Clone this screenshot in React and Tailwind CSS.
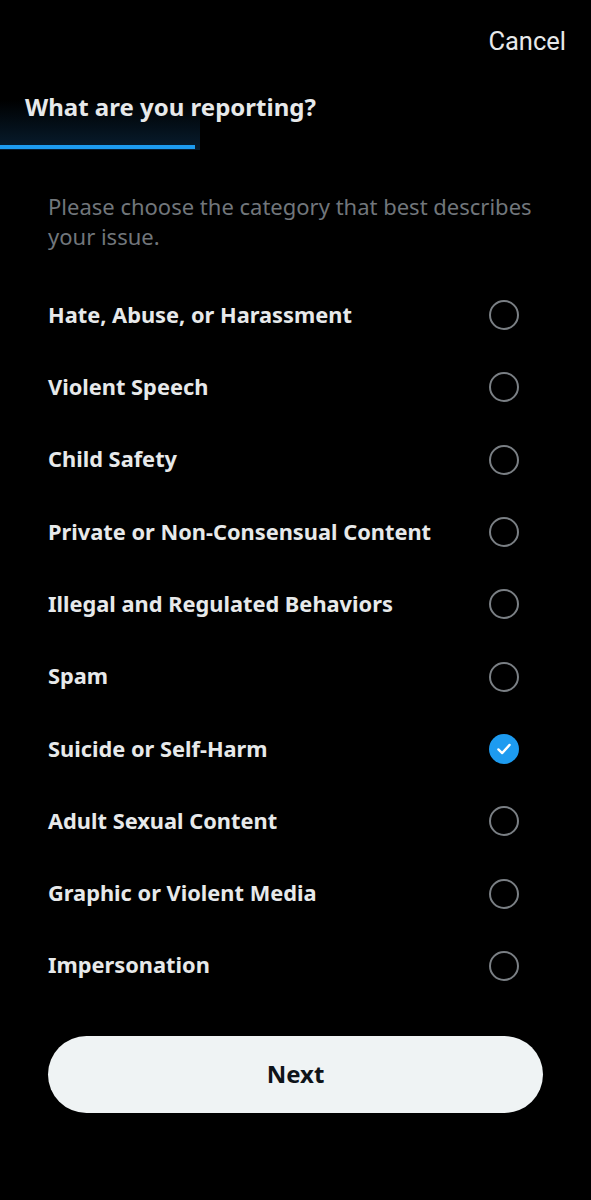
import React from "react";

const items = [
  "Hate, Abuse, or Harassment",
  "Violent Speech",
  "Child Safety",
  "Private or Non-Consensual Content",
  "Illegal and Regulated Behaviors",
  "Spam",
  "Suicide or Self-Harm",
  "Adult Sexual Content",
  "Graphic or Violent Media",
  "Impersonation",
];

function Radio({ checked }) {
  if (checked) {
    return (
      <div className="w-[30px] h-[30px] rounded-full bg-[#1d9bf0] flex items-center justify-center">
        <svg width="18" height="18" viewBox="0 0 24 24" fill="none" stroke="white" strokeWidth="3" strokeLinecap="round" strokeLinejoin="round">
          <path d="M4.5 12.5l5 5L19.5 6.5" />
        </svg>
      </div>
    );
  }
  return <div className="w-[30px] h-[30px] rounded-full border-2 border-[#7a7f84]" />;
}

export default function App() {
  return (
    <div className="w-[591px] h-[1200px] bg-black text-[#e7e9ea] flex flex-col" style={{ fontFamily: '"Noto Sans", sans-serif' }}>
      <div className="flex justify-end pr-[25px] pt-[24px] h-[60px]">
        <span className="text-[25.5px] leading-[34px] text-[#e7e9ea]" style={{ fontFamily: 'Roboto, sans-serif' }}>Cancel</span>
      </div>
      <div className="relative h-[90px]">
        <div className="absolute left-0 top-[40px] w-[200px] h-[50px] bg-gradient-to-t from-[#0b2a44] to-transparent opacity-70" />
        <div className="relative pl-[25px] pt-[30px] text-[24px] leading-[34px] font-bold text-[#e7e9ea]">What are you reporting?</div>
        <div className="absolute left-0 top-[85px] w-[195px] h-[4px] bg-[#1d9bf0]" />
      </div>
      <div className="pl-[48px] pr-[40px] pt-[41px] text-[22px] leading-[30px] text-[#71767b]">
        Please choose the category that best describes your issue.
      </div>
      <div className="flex flex-col pt-[28px]">
        {items.map((t) => (
          <div key={t} className="h-[72.3px] flex items-center justify-between pl-[48px] pr-[72px]">
            <span className="text-[21.8px] font-bold text-[#e7e9ea]">{t}</span>
            <Radio checked={t === "Suicide or Self-Harm"} />
          </div>
        ))}
      </div>
      <div className="px-[48px] pt-[34px]">
        <div className="h-[77px] rounded-full bg-[#eff3f4] flex items-center justify-center text-[24px] font-bold text-[#0f1419]">Next</div>
      </div>
    </div>
  );
}
